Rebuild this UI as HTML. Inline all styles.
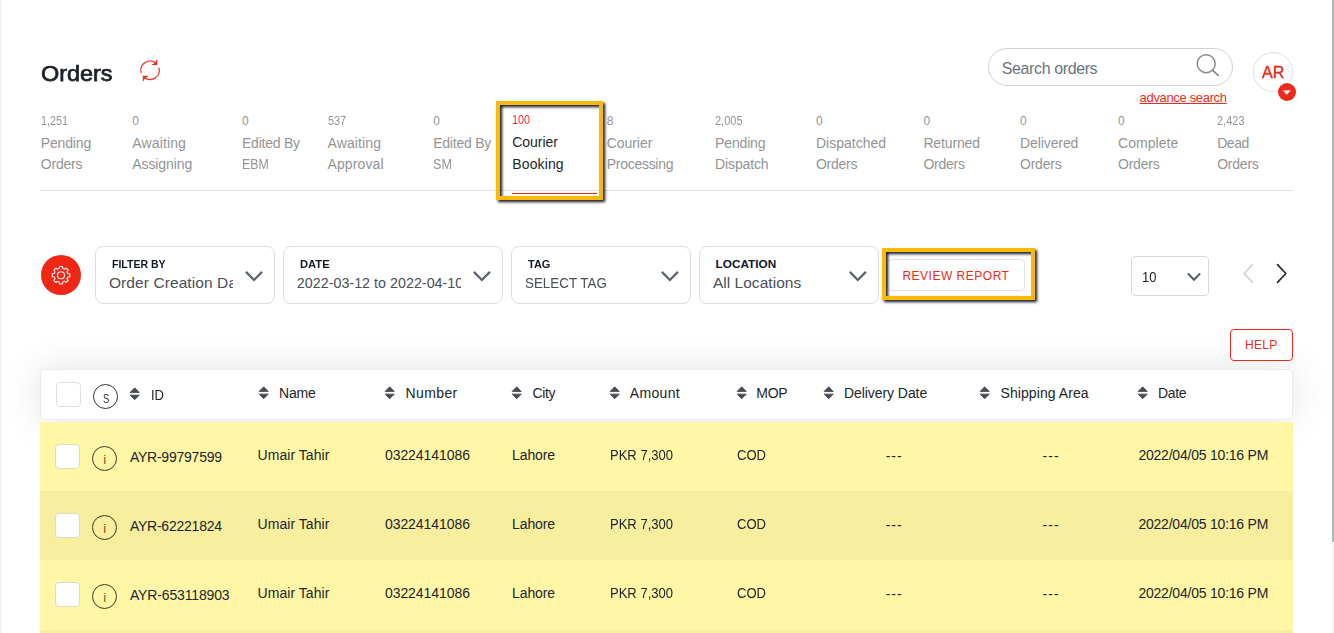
<!DOCTYPE html>
<html><head><meta charset="utf-8"><title>Orders</title>
<style>
html,body{margin:0;padding:0;background:#fff}
body{width:1334px;height:633px;position:relative;overflow:hidden;font-family:"Liberation Sans",sans-serif}
.t{position:absolute;white-space:nowrap}
</style></head><body>
<div style="position:absolute;left:0;top:0;width:1px;height:633px;background:#eeeeee"></div>
<div style="position:absolute;left:1332px;top:0;width:2px;height:633px;background:#f5f5f5"></div>
<div style="position:absolute;left:1332px;top:0;width:2px;height:542px;background:#adb5bd"></div>
<div class="t" style="top:62.88px;font-size:22px;line-height:22px;color:#1d2228;left:41.40px;transform:scaleX(1.0647);transform-origin:0 0;-webkit-text-stroke:0.75px #1d2228;">Orders</div>
<svg style="position:absolute;left:135px;top:55px" width="30" height="30" viewBox="0 0 30 30" fill="none">
<path d="M6.16 17.63 A9.2 9.2 0 0 1 21.32 8.52" stroke="#f03b2e" stroke-width="1.3" fill="none" stroke-linecap="round"/>
<path d="M23.98 13.02 A9.2 9.2 0 0 1 9.01 22.19" stroke="#f03b2e" stroke-width="1.3" fill="none" stroke-linecap="round"/>
<path d="M21.8 5.4 L21.8 9.5 L17.6 9.5" fill="#ee2a18" fill-opacity="0.85" stroke="#ee2a18" stroke-width="1.1" stroke-linejoin="miter" stroke-linecap="round"/>
<path d="M8.3 25.6 L8.3 21.4 L12.5 21.4" fill="#ee2a18" fill-opacity="0.85" stroke="#ee2a18" stroke-width="1.1" stroke-linejoin="miter" stroke-linecap="round"/>
</svg>
<div style="position:absolute;left:988px;top:48px;width:245px;height:38px;box-sizing:border-box;border:1px solid #ced4da;border-radius:19px;background:#fff"></div>
<div class="t" style="top:61.36px;font-size:16px;line-height:16px;color:#6c757d;letter-spacing:-0.392px;left:1001.80px;">Search orders</div>
<svg style="position:absolute;left:1193.35px;top:51.25px" width="30" height="30" viewBox="0 0 30 30" fill="none">
<circle cx="13.2" cy="12.7" r="9" stroke="#8a8a8a" stroke-width="1.5"/>
<path d="M19.7 19.3 L25.2 24.4" stroke="#8a8a8a" stroke-width="1.8" stroke-linecap="round"/>
</svg>
<div class="t" style="top:90.70px;font-size:13px;line-height:13px;color:#ee2a18;letter-spacing:-0.335px;left:1139.60px;text-decoration:underline;text-underline-offset:1px;text-decoration-thickness:1px;">advance search</div>
<div style="position:absolute;left:1253px;top:52px;width:40px;height:40px;box-sizing:border-box;border:1px solid #dde1e5;border-radius:50%;background:#fff"></div>
<div class="t" style="top:64.04px;font-size:17.2px;line-height:17.2px;color:#ee2a18;left:1261.80px;transform:scaleX(0.9319);transform-origin:0 0;-webkit-text-stroke:0.45px #ee2a18;">AR</div>
<div style="position:absolute;left:1277.7px;top:82.7px;width:18.2px;height:18.2px;border-radius:50%;background:#ee2a18"></div>
<svg style="position:absolute;left:1277px;top:82px" width="20" height="20" viewBox="0 0 20 20"><path d="M5.7 8.5 L13.7 8.5 L9.7 12.7 Z" fill="#fff"/></svg>
<div class="t" style="top:115.04px;font-size:12px;line-height:12px;color:#949494;left:40.80px;transform:scaleX(0.9000);transform-origin:0 0;">1,251</div>
<div class="t" style="top:136.35px;font-size:14px;line-height:14px;color:#949494;letter-spacing:-0.163px;left:40.80px;">Pending</div>
<div class="t" style="top:157.15px;font-size:14px;line-height:14px;color:#949494;letter-spacing:-0.230px;left:40.80px;">Orders</div>
<div class="t" style="top:115.04px;font-size:12px;line-height:12px;color:#949494;left:132.30px;">0</div>
<div class="t" style="top:136.35px;font-size:14px;line-height:14px;color:#949494;letter-spacing:0.125px;left:132.30px;">Awaiting</div>
<div class="t" style="top:157.15px;font-size:14px;line-height:14px;color:#949494;letter-spacing:-0.094px;left:132.30px;">Assigning</div>
<div class="t" style="top:115.04px;font-size:12px;line-height:12px;color:#949494;left:242.00px;">0</div>
<div class="t" style="top:136.35px;font-size:14px;line-height:14px;color:#949494;letter-spacing:-0.234px;left:242.00px;">Edited By</div>
<div class="t" style="top:157.15px;font-size:14px;line-height:14px;color:#949494;left:242.00px;transform:scaleX(0.8823);transform-origin:0 0;">EBM</div>
<div class="t" style="top:115.04px;font-size:12px;line-height:12px;color:#949494;left:327.50px;transform:scaleX(0.9000);transform-origin:0 0;">537</div>
<div class="t" style="top:136.35px;font-size:14px;line-height:14px;color:#949494;letter-spacing:0.125px;left:327.50px;">Awaiting</div>
<div class="t" style="top:157.15px;font-size:14px;line-height:14px;color:#949494;letter-spacing:0.107px;left:327.50px;">Approval</div>
<div class="t" style="top:115.04px;font-size:12px;line-height:12px;color:#949494;left:433.20px;">0</div>
<div class="t" style="top:136.35px;font-size:14px;line-height:14px;color:#949494;letter-spacing:-0.234px;left:433.20px;">Edited By</div>
<div class="t" style="top:157.15px;font-size:14px;line-height:14px;color:#949494;left:433.20px;transform:scaleX(0.9000);transform-origin:0 0;">SM</div>
<div class="t" style="top:114.04px;font-size:12px;line-height:12px;color:#ee2a18;left:512.30px;transform:scaleX(0.9000);transform-origin:0 0;">100</div>
<div class="t" style="top:135.35px;font-size:14px;line-height:14px;color:#212529;letter-spacing:-0.046px;left:512.30px;">Courier</div>
<div class="t" style="top:156.75px;font-size:14px;line-height:14px;color:#212529;letter-spacing:0.112px;left:512.30px;">Booking</div>
<div class="t" style="top:115.04px;font-size:12px;line-height:12px;color:#949494;left:606.70px;">8</div>
<div class="t" style="top:136.35px;font-size:14px;line-height:14px;color:#949494;letter-spacing:-0.046px;left:606.70px;">Courier</div>
<div class="t" style="top:157.15px;font-size:14px;line-height:14px;color:#949494;letter-spacing:-0.272px;left:606.70px;">Processing</div>
<div class="t" style="top:115.04px;font-size:12px;line-height:12px;color:#949494;left:715.10px;transform:scaleX(0.9167);transform-origin:0 0;">2,005</div>
<div class="t" style="top:136.35px;font-size:14px;line-height:14px;color:#949494;letter-spacing:-0.163px;left:715.10px;">Pending</div>
<div class="t" style="top:157.15px;font-size:14px;line-height:14px;color:#949494;letter-spacing:-0.129px;left:715.10px;">Dispatch</div>
<div class="t" style="top:115.04px;font-size:12px;line-height:12px;color:#949494;left:815.90px;">0</div>
<div class="t" style="top:136.35px;font-size:14px;line-height:14px;color:#949494;letter-spacing:0.011px;left:815.90px;">Dispatched</div>
<div class="t" style="top:157.15px;font-size:14px;line-height:14px;color:#949494;letter-spacing:-0.230px;left:815.90px;">Orders</div>
<div class="t" style="top:115.04px;font-size:12px;line-height:12px;color:#949494;left:923.40px;">0</div>
<div class="t" style="top:136.35px;font-size:14px;line-height:14px;color:#949494;letter-spacing:-0.146px;left:923.40px;">Returned</div>
<div class="t" style="top:157.15px;font-size:14px;line-height:14px;color:#949494;letter-spacing:-0.230px;left:923.40px;">Orders</div>
<div class="t" style="top:115.04px;font-size:12px;line-height:12px;color:#949494;left:1020.00px;">0</div>
<div class="t" style="top:136.35px;font-size:14px;line-height:14px;color:#949494;letter-spacing:-0.091px;left:1020.00px;">Delivered</div>
<div class="t" style="top:157.15px;font-size:14px;line-height:14px;color:#949494;letter-spacing:-0.230px;left:1020.00px;">Orders</div>
<div class="t" style="top:115.04px;font-size:12px;line-height:12px;color:#949494;left:1118.00px;">0</div>
<div class="t" style="top:136.35px;font-size:14px;line-height:14px;color:#949494;letter-spacing:0.061px;left:1118.00px;">Complete</div>
<div class="t" style="top:157.15px;font-size:14px;line-height:14px;color:#949494;letter-spacing:-0.230px;left:1118.00px;">Orders</div>
<div class="t" style="top:115.04px;font-size:12px;line-height:12px;color:#949494;left:1217.20px;transform:scaleX(0.9167);transform-origin:0 0;">2,423</div>
<div class="t" style="top:136.35px;font-size:14px;line-height:14px;color:#949494;letter-spacing:-0.467px;left:1217.20px;">Dead</div>
<div class="t" style="top:157.15px;font-size:14px;line-height:14px;color:#949494;letter-spacing:-0.230px;left:1217.20px;">Orders</div>
<div style="position:absolute;left:40px;top:190px;width:1253px;height:1px;background:#dee2e6"></div>
<div style="position:absolute;left:512px;top:192.8px;width:85px;height:1.3px;background:#ee2a18"></div>
<div style="position:absolute;box-sizing:border-box;border:4.2px solid #fbba05;filter:drop-shadow(2.3px 2.3px 1.7px rgba(10,12,28,1));left:496.3px;top:101.3px;width:106.8px;height:98.7px"></div>
<div style="position:absolute;left:40.8px;top:254.6px;width:40.4px;height:40.4px;border-radius:50%;background:#f02715"></div>
<svg style="position:absolute;left:41px;top:254.6px" width="40" height="40" viewBox="0 0 40 40" fill="none">
<path d="M18.26 13.52 L18.54 11.52 L21.46 11.52 L21.74 13.52 A6.95 6.95 0 0 1 23.53 14.26 L25.14 13.05 L27.20 15.11 L25.99 16.72 A6.95 6.95 0 0 1 26.73 18.51 L28.73 18.79 L28.73 21.71 L26.73 21.99 A6.95 6.95 0 0 1 25.99 23.78 L27.20 25.39 L25.14 27.45 L23.53 26.24 A6.95 6.95 0 0 1 21.74 26.98 L21.46 28.98 L18.54 28.98 L18.26 26.98 A6.95 6.95 0 0 1 16.47 26.24 L14.86 27.45 L12.80 25.39 L14.01 23.78 A6.95 6.95 0 0 1 13.27 21.99 L11.27 21.71 L11.27 18.79 L13.27 18.51 A6.95 6.95 0 0 1 14.01 16.72 L12.80 15.11 L14.86 13.05 L16.47 14.26 A6.95 6.95 0 0 1 18.26 13.52 Z" stroke="#fff" stroke-width="1.1" stroke-linejoin="round"/>
<circle cx="20.0" cy="20.25" r="3.5" stroke="#fff" stroke-width="1.1"/>
</svg>
<div style="position:absolute;left:95px;top:246px;width:180px;height:58px;box-sizing:border-box;border:1px solid #dadfe5;border-radius:8px;background:#fff"></div>
<div class="t" style="top:259.11px;font-size:11.8px;line-height:11.8px;color:#111827;font-weight:bold;left:112.00px;transform:scaleX(0.8914);transform-origin:0 0;">FILTER BY</div>
<div style="position:absolute;left:108.90px;top:271.88px;width:124.00px;height:23.5px;overflow:hidden;white-space:nowrap"><div style="position:absolute;left:0;top:3px;font-size:15.5px;line-height:15.5px;color:#495057;letter-spacing:0.093px;">Order Creation Date</div></div>
<svg style="position:absolute;left:0;top:0;overflow:visible" width="1" height="1" fill="none"><path d="M245.95 271.85 L254.00 280.00 L262.05 271.85" stroke="#5b646d" stroke-width="2.25" stroke-linecap="butt" stroke-linejoin="miter"/></svg>
<div style="position:absolute;left:283px;top:246px;width:220px;height:58px;box-sizing:border-box;border:1px solid #dadfe5;border-radius:8px;background:#fff"></div>
<div class="t" style="top:259.11px;font-size:11.8px;line-height:11.8px;color:#111827;font-weight:bold;left:300.00px;transform:scaleX(0.9470);transform-origin:0 0;">DATE</div>
<div style="position:absolute;left:296.80px;top:272.90px;width:164.50px;height:22.3px;overflow:hidden;white-space:nowrap"><div style="position:absolute;left:0;top:3px;font-size:14.3px;line-height:14.3px;color:#495057;letter-spacing:0.015px;">2022-03-12 to 2022-04-10</div></div>
<svg style="position:absolute;left:0;top:0;overflow:visible" width="1" height="1" fill="none"><path d="M473.85 271.85 L481.90 280.00 L489.95 271.85" stroke="#5b646d" stroke-width="2.25" stroke-linecap="butt" stroke-linejoin="miter"/></svg>
<div style="position:absolute;left:511px;top:246px;width:180px;height:58px;box-sizing:border-box;border:1px solid #dadfe5;border-radius:8px;background:#fff"></div>
<div class="t" style="top:259.11px;font-size:11.8px;line-height:11.8px;color:#111827;font-weight:bold;left:528.30px;transform:scaleX(0.9342);transform-origin:0 0;">TAG</div>
<div class="t" style="top:274.88px;font-size:15.5px;line-height:15.5px;color:#495057;left:525.00px;transform:scaleX(0.8633);transform-origin:0 0;">SELECT TAG</div>
<svg style="position:absolute;left:0;top:0;overflow:visible" width="1" height="1" fill="none"><path d="M661.85 271.85 L669.90 280.00 L677.95 271.85" stroke="#5b646d" stroke-width="2.25" stroke-linecap="butt" stroke-linejoin="miter"/></svg>
<div style="position:absolute;left:699px;top:246px;width:180px;height:58px;box-sizing:border-box;border:1px solid #dadfe5;border-radius:8px;background:#fff"></div>
<div class="t" style="top:259.11px;font-size:11.8px;line-height:11.8px;color:#111827;font-weight:bold;letter-spacing:-0.008px;left:715.60px;">LOCATION</div>
<div class="t" style="top:274.88px;font-size:15.5px;line-height:15.5px;color:#495057;letter-spacing:0.035px;left:712.90px;">All Locations</div>
<svg style="position:absolute;left:0;top:0;overflow:visible" width="1" height="1" fill="none"><path d="M849.75 271.85 L857.80 280.00 L865.85 271.85" stroke="#5b646d" stroke-width="2.25" stroke-linecap="butt" stroke-linejoin="miter"/></svg>
<div style="position:absolute;left:887.3px;top:259px;width:137.3px;height:31.6px;box-sizing:border-box;border:1px solid #dee2e6;border-radius:4px;background:#fff"></div>
<div class="t" style="top:269.64px;font-size:12px;line-height:12px;color:#ee2a18;letter-spacing:0.508px;left:902.40px;">REVIEW REPORT</div>
<div style="position:absolute;box-sizing:border-box;border:4.2px solid #fbba05;filter:drop-shadow(2.3px 2.3px 1.7px rgba(10,12,28,1));left:881.9px;top:248.1px;width:153.4px;height:51.7px"></div>
<div style="position:absolute;left:1131px;top:256px;width:78px;height:40px;box-sizing:border-box;border:1px solid #d3d9df;border-radius:4px;background:#fff"></div>
<div class="t" style="top:269.85px;font-size:14px;line-height:14px;color:#212529;left:1141.80px;transform:scaleX(0.9280);transform-origin:0 0;">10</div>
<svg style="position:absolute;left:0;top:0;overflow:visible" width="1" height="1" fill="none"><path d="M1187.80 273.35 L1194.00 279.70 L1200.20 273.35" stroke="#545b62" stroke-width="2.0" stroke-linecap="butt" stroke-linejoin="miter"/></svg>
<svg style="position:absolute;left:1240px;top:260px" width="16" height="28" viewBox="0 0 16 28" fill="none"><path d="M12.5 4.6 L4.1 13.5 L12.5 22.4" stroke="#cfcfcf" stroke-width="1.6" stroke-linecap="round" stroke-linejoin="round"/></svg>
<svg style="position:absolute;left:1274px;top:260px" width="16" height="28" viewBox="0 0 16 28" fill="none"><path d="M3.5 4.6 L11.9 13.5 L3.5 22.4" stroke="#2b2b2b" stroke-width="1.7" stroke-linecap="round" stroke-linejoin="round"/></svg>
<div style="position:absolute;left:1230px;top:329px;width:63px;height:32px;box-sizing:border-box;border:1px solid #ee2a18;border-radius:4px;background:#fff;z-index:3"></div>
<div class="t" style="top:339.44px;font-size:12px;line-height:12px;color:#ee2a18;letter-spacing:0.275px;left:1245.00px;z-index:4;">HELP</div>
<div style="position:absolute;left:40px;top:369px;width:1253px;height:51px;box-sizing:border-box;border-radius:4px;background:#fff;box-shadow:0 0 38px rgba(0,0,0,.115);border:1px solid #e9ebee;z-index:1"></div>
<div style="position:absolute;left:40px;top:422px;width:1253px;height:69px;background:#fff7a6;z-index:2"></div>
<div style="position:absolute;left:55.3px;top:444.0px;width:24.6px;height:24.6px;box-sizing:border-box;border:1px solid #dcdcc2;border-radius:4px;background:#fff;z-index:2"></div>
<div style="position:absolute;left:92px;top:445.9px;width:25.2px;height:25.2px;box-sizing:border-box;border:1px solid #3a3a2a;border-radius:50%;z-index:2"></div>
<div class="t" style="top:453.40px;font-size:13px;line-height:13px;color:#6b5d1a;left:-45.40px;width:300px;text-align:center;z-index:2;">i</div>
<div class="t" style="top:450.05px;font-size:14px;line-height:14px;color:#212529;letter-spacing:-0.232px;left:129.90px;z-index:2;">AYR-99797599</div>
<div class="t" style="top:448.05px;font-size:14px;line-height:14px;color:#212529;letter-spacing:0.042px;left:257.60px;z-index:2;">Umair Tahir</div>
<div class="t" style="top:448.05px;font-size:14px;line-height:14px;color:#212529;letter-spacing:-0.042px;left:384.90px;z-index:2;">03224141086</div>
<div class="t" style="top:448.05px;font-size:14px;line-height:14px;color:#212529;letter-spacing:-0.145px;left:512.10px;z-index:2;">Lahore</div>
<div class="t" style="top:448.05px;font-size:14px;line-height:14px;color:#212529;left:609.50px;transform:scaleX(0.9299);transform-origin:0 0;z-index:2;">PKR 7,300</div>
<div class="t" style="top:448.05px;font-size:14px;line-height:14px;color:#212529;left:736.70px;transform:scaleX(0.9317);transform-origin:0 0;z-index:2;">COD</div>
<div class="t" style="top:449.05px;font-size:14px;line-height:14px;color:#212529;left:744.20px;width:300px;text-align:center;z-index:2;letter-spacing:1px;">---</div>
<div class="t" style="top:449.05px;font-size:14px;line-height:14px;color:#212529;left:901.10px;width:300px;text-align:center;z-index:2;letter-spacing:1px;">---</div>
<div class="t" style="top:448.05px;font-size:14px;line-height:14px;color:#212529;letter-spacing:-0.215px;left:1138.40px;z-index:2;">2022/04/05 10:16 PM</div>
<div style="position:absolute;left:40px;top:491px;width:1253px;height:69px;background:#f7ee9f;z-index:2"></div>
<div style="position:absolute;left:55.3px;top:513.0px;width:24.6px;height:24.6px;box-sizing:border-box;border:1px solid #dcdcc2;border-radius:4px;background:#fff;z-index:2"></div>
<div style="position:absolute;left:92px;top:514.9px;width:25.2px;height:25.2px;box-sizing:border-box;border:1px solid #3a3a2a;border-radius:50%;z-index:2"></div>
<div class="t" style="top:522.40px;font-size:13px;line-height:13px;color:#6b5d1a;left:-45.40px;width:300px;text-align:center;z-index:2;">i</div>
<div class="t" style="top:519.05px;font-size:14px;line-height:14px;color:#212529;letter-spacing:-0.232px;left:129.90px;z-index:2;">AYR-62221824</div>
<div class="t" style="top:517.05px;font-size:14px;line-height:14px;color:#212529;letter-spacing:0.042px;left:257.60px;z-index:2;">Umair Tahir</div>
<div class="t" style="top:517.05px;font-size:14px;line-height:14px;color:#212529;letter-spacing:-0.042px;left:384.90px;z-index:2;">03224141086</div>
<div class="t" style="top:517.05px;font-size:14px;line-height:14px;color:#212529;letter-spacing:-0.145px;left:512.10px;z-index:2;">Lahore</div>
<div class="t" style="top:517.05px;font-size:14px;line-height:14px;color:#212529;left:609.50px;transform:scaleX(0.9299);transform-origin:0 0;z-index:2;">PKR 7,300</div>
<div class="t" style="top:517.05px;font-size:14px;line-height:14px;color:#212529;left:736.70px;transform:scaleX(0.9317);transform-origin:0 0;z-index:2;">COD</div>
<div class="t" style="top:518.05px;font-size:14px;line-height:14px;color:#212529;left:744.20px;width:300px;text-align:center;z-index:2;letter-spacing:1px;">---</div>
<div class="t" style="top:518.05px;font-size:14px;line-height:14px;color:#212529;left:901.10px;width:300px;text-align:center;z-index:2;letter-spacing:1px;">---</div>
<div class="t" style="top:517.05px;font-size:14px;line-height:14px;color:#212529;letter-spacing:-0.215px;left:1138.40px;z-index:2;">2022/04/05 10:16 PM</div>
<div style="position:absolute;left:40px;top:560px;width:1253px;height:69.6px;background:#fff7a6;z-index:2"></div>
<div style="position:absolute;left:55.3px;top:582.0px;width:24.6px;height:24.6px;box-sizing:border-box;border:1px solid #dcdcc2;border-radius:4px;background:#fff;z-index:2"></div>
<div style="position:absolute;left:92px;top:583.9px;width:25.2px;height:25.2px;box-sizing:border-box;border:1px solid #3a3a2a;border-radius:50%;z-index:2"></div>
<div class="t" style="top:591.40px;font-size:13px;line-height:13px;color:#6b5d1a;left:-45.40px;width:300px;text-align:center;z-index:2;">i</div>
<div class="t" style="top:588.05px;font-size:14px;line-height:14px;color:#212529;letter-spacing:-0.142px;left:129.90px;z-index:2;">AYR-653118903</div>
<div class="t" style="top:586.05px;font-size:14px;line-height:14px;color:#212529;letter-spacing:0.042px;left:257.60px;z-index:2;">Umair Tahir</div>
<div class="t" style="top:586.05px;font-size:14px;line-height:14px;color:#212529;letter-spacing:-0.042px;left:384.90px;z-index:2;">03224141086</div>
<div class="t" style="top:586.05px;font-size:14px;line-height:14px;color:#212529;letter-spacing:-0.145px;left:512.10px;z-index:2;">Lahore</div>
<div class="t" style="top:586.05px;font-size:14px;line-height:14px;color:#212529;left:609.50px;transform:scaleX(0.9299);transform-origin:0 0;z-index:2;">PKR 7,300</div>
<div class="t" style="top:586.05px;font-size:14px;line-height:14px;color:#212529;left:736.70px;transform:scaleX(0.9317);transform-origin:0 0;z-index:2;">COD</div>
<div class="t" style="top:587.05px;font-size:14px;line-height:14px;color:#212529;left:744.20px;width:300px;text-align:center;z-index:2;letter-spacing:1px;">---</div>
<div class="t" style="top:587.05px;font-size:14px;line-height:14px;color:#212529;left:901.10px;width:300px;text-align:center;z-index:2;letter-spacing:1px;">---</div>
<div class="t" style="top:586.05px;font-size:14px;line-height:14px;color:#212529;letter-spacing:-0.215px;left:1138.40px;z-index:2;">2022/04/05 10:16 PM</div>
<div style="position:absolute;left:40px;top:629.6px;width:1253px;height:10px;background:#f7ee9f;z-index:2"></div>
<div style="position:absolute;left:56.3px;top:382px;width:24.8px;height:24.8px;box-sizing:border-box;border:1px solid #dce1e8;border-radius:4px;background:#fff;z-index:3;"></div>
<div style="position:absolute;left:92.8px;top:383.7px;width:25.2px;height:25.2px;box-sizing:border-box;border:1px solid #333;border-radius:50%;z-index:3;"></div>
<div class="t" style="top:392.10px;font-size:13px;line-height:13px;color:#333;left:102.70px;transform:scaleX(0.7304);transform-origin:0 0;z-index:3;">S</div>
<svg style="position:absolute;left:129.20px;top:387.40px;z-index:3;" width="11.4" height="14" viewBox="-0.5 -0.4 11.4 14"><path d="M5.2 0.45 L9.75 5.0 L0.65 5.0 Z M0.65 7.75 L9.75 7.75 L5.2 12.3 Z" fill="#474d54" stroke="#474d54" stroke-width="0.9" stroke-linejoin="round"/></svg>
<div class="t" style="top:388.15px;font-size:14px;line-height:14px;color:#212529;left:150.50px;transform:scaleX(0.9286);transform-origin:0 0;z-index:3;">ID</div>
<svg style="position:absolute;left:257.50px;top:386.20px;z-index:3;" width="11.4" height="14" viewBox="-0.5 -0.4 11.4 14"><path d="M5.2 0.45 L9.75 5.0 L0.65 5.0 Z M0.65 7.75 L9.75 7.75 L5.2 12.3 Z" fill="#474d54" stroke="#474d54" stroke-width="0.9" stroke-linejoin="round"/></svg>
<div class="t" style="top:386.15px;font-size:14px;line-height:14px;color:#212529;letter-spacing:-0.158px;left:279.00px;z-index:3;">Name</div>
<svg style="position:absolute;left:384.30px;top:386.20px;z-index:3;" width="11.4" height="14" viewBox="-0.5 -0.4 11.4 14"><path d="M5.2 0.45 L9.75 5.0 L0.65 5.0 Z M0.65 7.75 L9.75 7.75 L5.2 12.3 Z" fill="#474d54" stroke="#474d54" stroke-width="0.9" stroke-linejoin="round"/></svg>
<div class="t" style="top:386.15px;font-size:14px;line-height:14px;color:#212529;letter-spacing:0.390px;left:405.50px;z-index:3;">Number</div>
<svg style="position:absolute;left:511.20px;top:386.20px;z-index:3;" width="11.4" height="14" viewBox="-0.5 -0.4 11.4 14"><path d="M5.2 0.45 L9.75 5.0 L0.65 5.0 Z M0.65 7.75 L9.75 7.75 L5.2 12.3 Z" fill="#474d54" stroke="#474d54" stroke-width="0.9" stroke-linejoin="round"/></svg>
<div class="t" style="top:386.15px;font-size:14px;line-height:14px;color:#212529;letter-spacing:-0.342px;left:532.40px;z-index:3;">City</div>
<svg style="position:absolute;left:608.50px;top:386.20px;z-index:3;" width="11.4" height="14" viewBox="-0.5 -0.4 11.4 14"><path d="M5.2 0.45 L9.75 5.0 L0.65 5.0 Z M0.65 7.75 L9.75 7.75 L5.2 12.3 Z" fill="#474d54" stroke="#474d54" stroke-width="0.9" stroke-linejoin="round"/></svg>
<div class="t" style="top:386.15px;font-size:14px;line-height:14px;color:#212529;letter-spacing:0.350px;left:629.70px;z-index:3;">Amount</div>
<svg style="position:absolute;left:735.50px;top:386.20px;z-index:3;" width="11.4" height="14" viewBox="-0.5 -0.4 11.4 14"><path d="M5.2 0.45 L9.75 5.0 L0.65 5.0 Z M0.65 7.75 L9.75 7.75 L5.2 12.3 Z" fill="#474d54" stroke="#474d54" stroke-width="0.9" stroke-linejoin="round"/></svg>
<div class="t" style="top:386.15px;font-size:14px;line-height:14px;color:#212529;letter-spacing:-0.188px;left:756.20px;z-index:3;">MOP</div>
<svg style="position:absolute;left:823.20px;top:386.20px;z-index:3;" width="11.4" height="14" viewBox="-0.5 -0.4 11.4 14"><path d="M5.2 0.45 L9.75 5.0 L0.65 5.0 Z M0.65 7.75 L9.75 7.75 L5.2 12.3 Z" fill="#474d54" stroke="#474d54" stroke-width="0.9" stroke-linejoin="round"/></svg>
<div class="t" style="top:386.15px;font-size:14px;line-height:14px;color:#212529;letter-spacing:-0.067px;left:844.00px;z-index:3;">Delivery Date</div>
<svg style="position:absolute;left:979.30px;top:386.20px;z-index:3;" width="11.4" height="14" viewBox="-0.5 -0.4 11.4 14"><path d="M5.2 0.45 L9.75 5.0 L0.65 5.0 Z M0.65 7.75 L9.75 7.75 L5.2 12.3 Z" fill="#474d54" stroke="#474d54" stroke-width="0.9" stroke-linejoin="round"/></svg>
<div class="t" style="top:386.15px;font-size:14px;line-height:14px;color:#212529;letter-spacing:0.079px;left:1000.50px;z-index:3;">Shipping Area</div>
<svg style="position:absolute;left:1136.70px;top:386.20px;z-index:3;" width="11.4" height="14" viewBox="-0.5 -0.4 11.4 14"><path d="M5.2 0.45 L9.75 5.0 L0.65 5.0 Z M0.65 7.75 L9.75 7.75 L5.2 12.3 Z" fill="#474d54" stroke="#474d54" stroke-width="0.9" stroke-linejoin="round"/></svg>
<div class="t" style="top:386.15px;font-size:14px;line-height:14px;color:#212529;letter-spacing:-0.308px;left:1158.00px;z-index:3;">Date</div>
</body></html>
